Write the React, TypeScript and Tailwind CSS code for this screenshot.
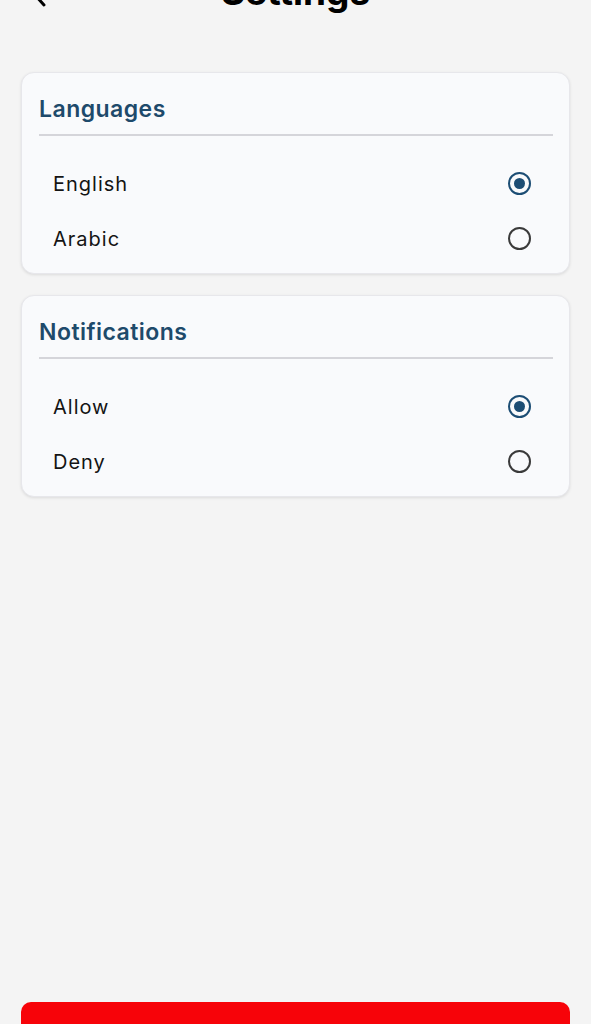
import React, { useState } from "react";

type Option = { label: string; value: string };

function Radio({ checked }: { checked: boolean }) {
  return (
    <span
      className={
        "flex h-[23px] w-[23px] items-center justify-center rounded-full border-[2.5px] " +
        (checked ? "border-[#1c4d74]" : "border-[#3a3a3a]")
      }
    >
      {checked && <span className="h-[11px] w-[11px] rounded-full bg-[#1c4d74]" />}
    </span>
  );
}

function SettingsCard({
  title,
  options,
  value,
  onChange
}: {
  title: string;
  options: Option[];
  value: string;
  onChange: (v: string) => void;
}) {
  return (
    <div className="mx-[21px] rounded-[13px] border border-[#e7e7eb] bg-[#f9fafc] pl-[17px] pr-[16px] pt-[22px] pb-[7px] shadow-[0_1px_3px_rgba(0,0,0,0.10)]">
      <h2 className="text-[23px] leading-[28px] font-semibold tracking-[0.02em] text-[#1e4a6b]">
        {title}
      </h2>
      <div className="mt-[11px] h-[2px] bg-[#d5d5da]" />

      {/* options */}
      <div className="mt-[20px]">
        {options.map((o) => (
          <button
            key={o.value}
            type="button"
            onClick={() => onChange(o.value)}
            className="flex h-[55px] w-full items-center justify-between pl-[14px] pr-[22px] text-left"
          >
            <span className="text-[20px] tracking-[0.05em] text-[#141414]">{o.label}</span>
            <Radio checked={value === o.value} />
          </button>
        ))}
      </div>
    </div>
  );
}

export default function App() {
  const [lang, setLang] = useState("en");
  const [notif, setNotif] = useState("allow");

  return (
    <div className="h-[1024px] overflow-hidden bg-[#f4f4f4] font-['Inter','Roboto',sans-serif]">
      {/* Header (scrolled partly off screen) */}
      <div className="relative -mt-[30px] flex h-[44px] items-center justify-center">
        <svg
          className="absolute left-[26px] top-[11px]"
          width="28"
          height="28"
          viewBox="0 0 28 28"
          fill="none"
          stroke="#000"
          strokeWidth="3"
          strokeLinecap="round"
          strokeLinejoin="round"
        >
          <path d="M18 4 L9 14 L18 24" />
        </svg>
        <h1 className="text-[37px] leading-[44px] font-bold text-black">Settings</h1>
      </div>

      <div className="mt-[58px] flex flex-col gap-[21px]">
        <SettingsCard
          title="Languages"
          options={[
            { label: "English", value: "en" },
            { label: "Arabic", value: "ar" }
          ]}
          value={lang}
          onChange={setLang}
        />
        <SettingsCard
          title="Notifications"
          options={[
            { label: "Allow", value: "allow" },
            { label: "Deny", value: "deny" }
          ]}
          value={notif}
          onChange={setNotif}
        />
      </div>

      {/* Logout button, mostly below the fold */}
      <button
        type="button"
        className="mx-[21px] mt-[505px] flex h-[74px] w-[549px] items-center justify-center rounded-[10px] bg-[#f70309] text-[19px] font-semibold text-white"
      >
        Logout
      </button>
    </div>
  );
}
